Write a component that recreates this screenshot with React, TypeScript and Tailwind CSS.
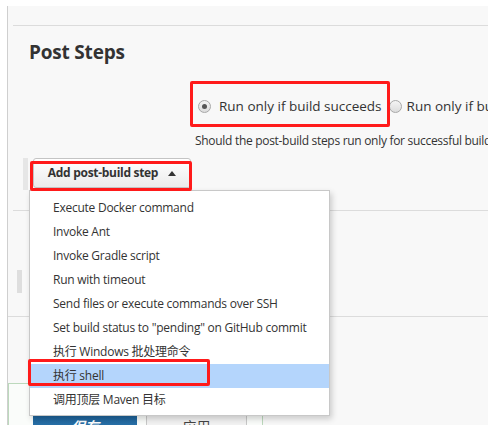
import React from "react";

const menuItems = [
  "Execute Docker command",
  "Invoke Ant",
  "Invoke Gradle script",
  "Run with timeout",
  "Send files or execute commands over SSH",
  'Set build status to "pending" on GitHub commit',
  "执行 Windows 批处理命令",
  "执行 shell",
  "调用顶层 Maven 目标",
];

function Radio({ checked }: { checked?: boolean }) {
  return (
    <span className="flex h-[13px] w-[13px] shrink-0 items-center justify-center rounded-full border border-[#a8a8a8] bg-gradient-to-b from-[#f4f4f4] to-[#dcdcdc]">
      {checked && <span className="h-[5px] w-[5px] rounded-full bg-[#555]" />}
    </span>
  );
}

export default function App() {
  return (
    <div
      className="relative h-[445px] w-[488px] overflow-hidden bg-white pt-[6px] text-[#333]"
      style={{ fontFamily: '"Open Sans", "Noto Sans CJK SC", sans-serif' }}
    >
      {/* config panel */}
      <div className="relative ml-[7px] h-[419px] overflow-hidden border-l border-[#cfcfcf] bg-[#f8f8f8]">
        <div className="h-[19px]" />
        <div className="ml-[5px] h-px bg-[#dcdcdc]" />

        <h2 className="pl-[21px] pt-[14px] text-[19px] font-bold leading-[24px] tracking-[-0.2px] text-[#333]">
          Post Steps
        </h2>

        <div className="mt-[32px] flex items-center whitespace-nowrap pl-[190px] text-[13.5px] leading-[20px]">
          <Radio checked />
          <span className="ml-[8px]">Run only if build succeeds</span>
          <span className="ml-[7px]">
            <Radio />
          </span>
          <span className="ml-[5px]">Run only if build succeeds or is unstable</span>
        </div>

        <p className="mt-[17px] whitespace-nowrap pl-[187px] text-[12px] leading-[16px] tracking-[-0.3px]">
          Should the post-build steps run only for successful builds, etc.
        </p>

        <div className="mt-[9px] flex h-[32px] items-stretch">
          <div className="ml-[15px] w-[5px] bg-[#e6e6e6]" />
          <button className="ml-[5px] flex h-[30px] w-[158px] items-center justify-center gap-[10px] rounded-[3px] border border-[#c4c4c4] bg-gradient-to-b from-white to-[#ececec] text-[12px] font-bold tracking-[-0.3px] text-[#333]">
            Add post-build step
            <svg width="8" height="5" viewBox="0 0 8 5">
              <path d="M0 5 L4 0 L8 5 Z" fill="#333" />
            </svg>
          </button>
        </div>

        <div className="mt-[20px] ml-[5px] h-px bg-[#dcdcdc]" />

        <div className="mt-[59px] ml-[9px] h-[23px] w-[5px] bg-[#dedede]" />

        <div className="mt-[23px] h-px bg-[#dcdcdc]" />

        {/* bottom sticker */}
        <div className="mt-[66px] h-[60px] w-[255px] border-l border-t border-r border-[#bcd9bc] bg-[#fafcfa] pl-[24px] pt-[30px]">
          <div className="flex gap-[9px]">
            <div className="flex h-[30px] w-[104px] justify-center bg-gradient-to-b from-[#1b5f95] to-[#3d8cc6] pt-[2px] text-[14px] font-bold italic text-white">
              保存
            </div>
            <div className="flex h-[30px] w-[101px] justify-center border-l border-r border-[#c8c8c8] bg-[#f2f2f2] pt-[2px] text-[14px] text-[#444]">
              应用
            </div>
          </div>
        </div>
      </div>

      {/* dropdown menu */}
      <div className="absolute left-[29px] top-[190px] w-[301px] border border-[#c8c8c8] bg-white pb-[3px] pt-[5px] shadow-[2px_3px_6px_rgba(0,0,0,0.18)]">
        {menuItems.map((item) => (
          <div
            key={item}
            className={`flex h-[24px] items-center whitespace-nowrap pl-[23px] text-[12px] tracking-[-0.25px] ${
              item === "执行 shell" ? "bg-[#b4d5fc]" : ""
            }`}
          >
            {item}
          </div>
        ))}
      </div>

      {/* annotation boxes */}
      <div className="absolute left-[190px] top-[81px] h-[46px] w-[200px] rounded-[2px] border-[3px] border-[#ff1a1a]" />
      <div className="absolute left-[30px] top-[161px] h-[30px] w-[162px] rounded-[2px] border-[3px] border-[#ff1a1a]" />
      <div className="absolute left-[28px] top-[359px] h-[27px] w-[182px] rounded-[2px] border-[3px] border-[#ff1a1a]" />
    </div>
  );
}
